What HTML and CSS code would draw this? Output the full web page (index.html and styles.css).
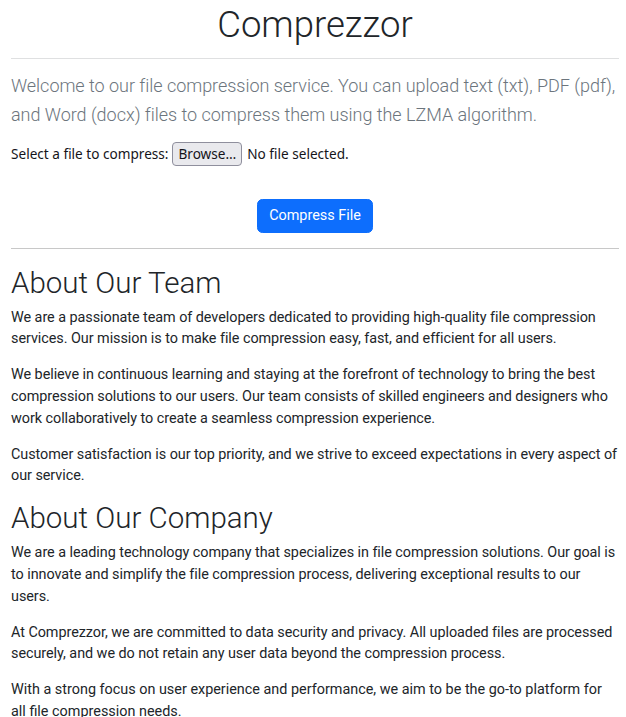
FILE: index.html
```html
<!DOCTYPE html>
<html lang="en">
<head>
<meta charset="utf-8">
<title>Comprezzor</title>
<link rel="stylesheet" href="styles.css">
</head>
<body>
<div class="container">
  <h1 class="title">Comprezzor</h1>
  <div class="rule rule-light"></div>
  <p class="lead">Welcome to our file compression service. You can upload text (txt), PDF (pdf), and Word (docx) files to compress them using the LZMA algorithm.</p>
  <form class="upload">
    <div class="file-row">
      <span class="file-label">Select a file to compress:</span>
      <span class="browse">Browse…</span>
      <span class="file-status">No file selected.</span>
    </div>
    <div class="submit-row">
      <button type="button" class="btn-primary">Compress File</button>
    </div>
  </form>
  <div class="rule rule-dark"></div>
  <section class="about">
    <h2>About Our Team</h2>
    <p>We are a passionate team of developers dedicated to providing high-quality file compression services. Our mission is to make file compression easy, fast, and efficient for all users.</p>
    <p>We believe in continuous learning and staying at the forefront of technology to bring the best compression solutions to our users. Our team consists of skilled engineers and designers who work collaboratively to create a seamless compression experience.</p>
    <p>Customer satisfaction is our top priority, and we strive to exceed expectations in every aspect of our service.</p>
  </section>
  <section class="about">
    <h2>About Our Company</h2>
    <p>We are a leading technology company that specializes in file compression solutions. Our goal is to innovate and simplify the file compression process, delivering exceptional results to our users.</p>
    <p>At Comprezzor, we are committed to data security and privacy. All uploaded files are processed securely, and we do not retain any user data beyond the compression process.</p>
    <p class="tracking-normal">With a strong focus on user experience and performance, we aim to be the go-to platform for all file compression needs.</p>
  </section>
</div>
</body>
</html>
```
FILE: styles.css
```css
* { box-sizing: border-box; }
body {
  margin: 0;
  font-family: Roboto, "Liberation Sans", sans-serif;
  font-size: 14.4px;
  line-height: 21.6px;
  color: #212529;
  background: #fff;
}
.container {
  padding: 0 7px 0 11px;
}
.title {
  margin: 3px 0 0;
  font-size: 36.5px;
  font-weight: 300;
  line-height: 43px;
  text-align: center;
}
.rule { height: 1px; }
.rule-light { background: #dfe0e1; margin-top: 12px; }
.rule-dark { background: #c8c8c8; margin-top: 15px; }
.lead {
  margin: 12px 0 0;
  font-size: 18px;
  font-weight: 300;
  line-height: 29px;
  color: #6c757d;
  letter-spacing: -0.03px;
}
.file-row {
  display: flex;
  align-items: center;
  margin-top: 13px;
  height: 24px;
  font-family: "Noto Sans", sans-serif;
  font-size: 13.6px;
  color: #15141a;
}
.browse {
  margin-left: 4px;
  height: 24px;
  padding: 0 5px;
  display: flex;
  align-items: center;
  background: #e9e9ed;
  border: 1px solid #8f8f9d;
  border-radius: 4px;
}
.file-status { margin-left: 5px; }
.submit-row {
  display: flex;
  justify-content: center;
  margin-top: 33px;
}
.btn-primary {
  font-family: Roboto, sans-serif;
  font-size: 14.4px;
  line-height: 21.6px;
  height: 34px;
  padding: 5.4px 10.8px;
  color: #fff;
  background: #0d6efd;
  border: 1px solid #0d6efd;
  border-radius: 5.4px;
}
.about h2 {
  margin: 0 0 6.5px;
  font-size: 29.5px;
  font-weight: 300;
  line-height: 34.8px;
}
.about:first-of-type h2 { margin-top: 16.5px; }
.about p {
  margin: 0 0 14.4px;
  letter-spacing: -0.05px;
}
.about p.tracking-normal { letter-spacing: 0; }
```
